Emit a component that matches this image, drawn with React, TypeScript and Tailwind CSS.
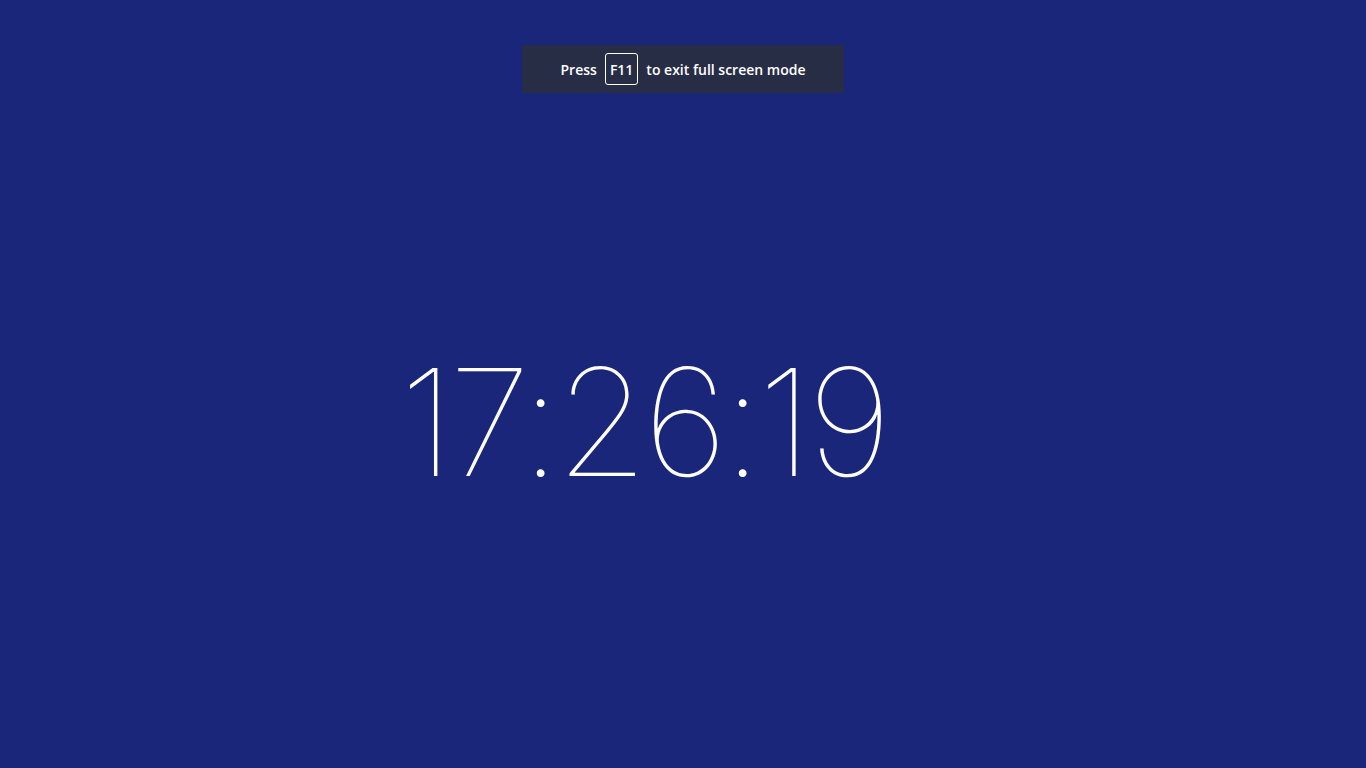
import React from 'react';

export default function App() {
  return (
    <div className="w-[1366px] h-[768px] bg-[#19267a] flex flex-col items-center overflow-hidden">
      <div className="mt-[45px] w-[322px] h-[48px] bg-[#272d45] flex items-center justify-center gap-[8px] text-white text-[14px] font-semibold font-['Open_Sans',sans-serif]">
        <span>Press</span>
        <span className="h-[32px] px-[4px] border border-white rounded-[3px] flex items-center">F11</span>
        <span>to exit full screen mode</span>
      </div>
      <div className="mt-[255px] mr-[80px] text-white font-['Inter',sans-serif] font-thin text-[149px] leading-none tracking-[-5px]">
        17:26:19
      </div>
    </div>
  );
}
